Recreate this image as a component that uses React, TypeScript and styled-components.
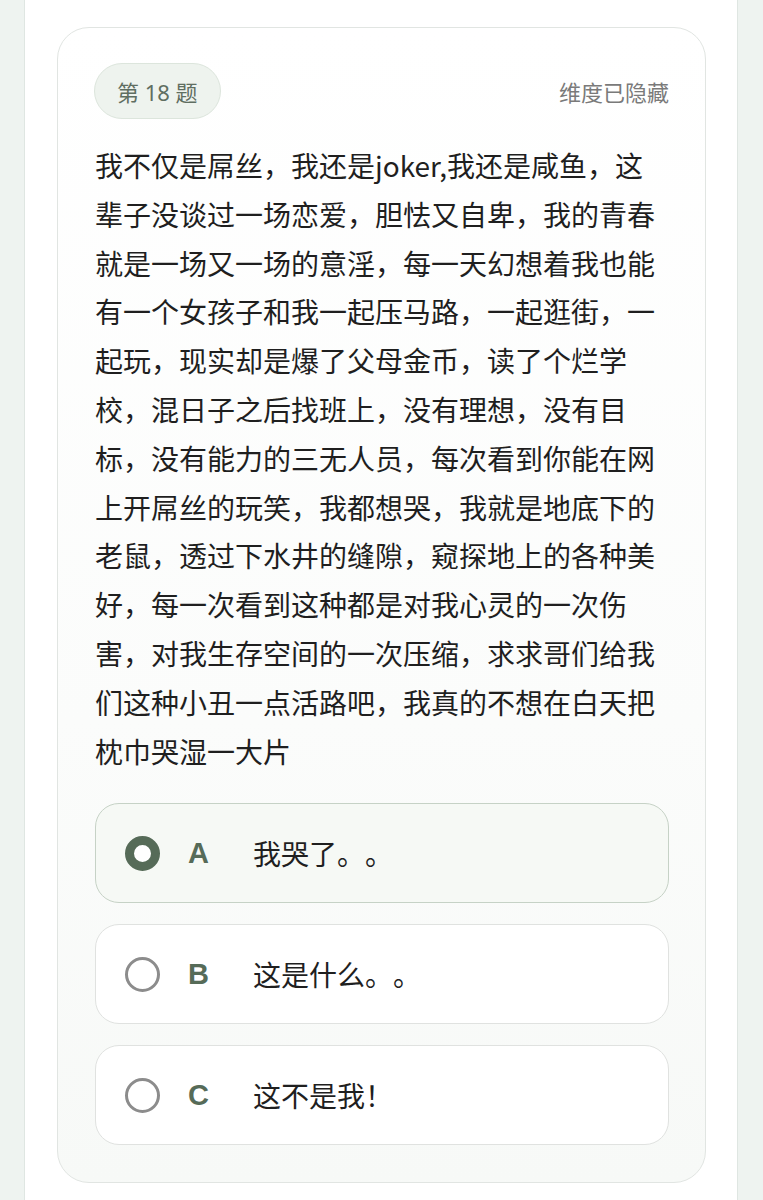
import React from "react";
import styled, { createGlobalStyle } from "styled-components";

const Global = createGlobalStyle`
  html, body {
    margin: 0;
    padding: 0;
    background: #eef3f0;
  }
  body {
    font-family: "Noto Sans CJK SC", "Noto Sans", sans-serif;
    -webkit-font-smoothing: antialiased;
    text-spacing-trim: space-all;
  }
`;

const Column = styled.div`
  box-sizing: border-box;
  width: 714px;
  margin-left: 24px;
  min-height: 1200px;
  background: #ffffff;
  border-left: 1px solid #dfe6e2;
  border-right: 1px solid #dfe6e2;
  padding: 27px 32px 40px;
`;

const Card = styled.section`
  box-sizing: border-box;
  width: 649px;
  border: 1px solid #e1e5e2;
  border-radius: 32px;
  background: linear-gradient(180deg, #ffffff 0%, #fbfcfb 60%, #f7f9f7 100%);
  padding: 35px 36px 37px 37px;
  display: flex;
  flex-direction: column;
`;

const Header = styled.div`
  display: flex;
  align-items: center;
  justify-content: space-between;
  height: 56px;
`;

const Badge = styled.div`
  box-sizing: border-box;
  height: 56px;
  display: flex;
  align-items: center;
  padding: 0 22px;
  border-radius: 28px;
  background: #eef3ee;
  border: 1px solid #dce5dc;
  color: #5f6e61;
  font-family: "Noto Sans", "Noto Sans CJK SC", sans-serif;
  font-size: 22px;
  margin-left: -1px;
`;

const Hidden = styled.div`
  color: #7a7a7a;
  font-size: 22px;
`;

const Question = styled.p`
  margin: 22px 0 0;
  font-size: 28px;
  line-height: 48.8px;
  color: #1f1f1f;
  text-spacing-trim: space-all;
`;

const Options = styled.div`
  display: flex;
  flex-direction: column;
  gap: 21px;
  margin-top: 28px;
`;

const Option = styled.div<{ $selected?: boolean }>`
  box-sizing: border-box;
  height: 100px;
  display: flex;
  align-items: center;
  padding-left: 29px;
  border-radius: 24px;
  border: 1.5px solid ${(p) => (p.$selected ? "#c6d2c6" : "#e0e2e0")};
  background: ${(p) => (p.$selected ? "#f6f9f5" : "#ffffff")};
`;

const Radio = styled.span<{ $selected?: boolean }>`
  box-sizing: border-box;
  width: 35px;
  height: 35px;
  border-radius: 50%;
  flex-shrink: 0;
  border: ${(p) => (p.$selected ? "9.5px solid #566b58" : "3px solid #8c8c8c")};
  background: #ffffff;
`;

const Letter = styled.span`
  width: 22px;
  margin-left: 28px;
  font-family: "Liberation Sans", Arial, sans-serif;
  font-weight: 700;
  font-size: 29px;
  color: #566b58;
`;

const OptionText = styled.span`
  margin-left: 43px;
  font-size: 28px;
  color: #1f1f1f;
  text-spacing-trim: space-all;
`;

const options = [
  { key: "A", text: "我哭了。。", selected: true },
  { key: "B", text: "这是什么。。", selected: false },
  { key: "C", text: "这不是我！", selected: false },
];

export default function App() {
  return (
    <>
      <Global />
      <Column>
        <Card>
          <Header>
            <Badge>第 18 题</Badge>
            <Hidden>维度已隐藏</Hidden>
          </Header>
          <Question>
            我不仅是屌丝，我还是joker,我还是咸鱼，这辈子没谈过一场恋爱，胆怯又自卑，我的青春就是一场又一场的意淫，每一天幻想着我也能有一个女孩子和我一起压马路，一起逛街，一起玩，现实却是爆了父母金币，读了个烂学校，混日子之后找班上，没有理想，没有目标，没有能力的三无人员，每次看到你能在网上开屌丝的玩笑，我都想哭，我就是地底下的老鼠，透过下水井的缝隙，窥探地上的各种美好，每一次看到这种都是对我心灵的一次伤害，对我生存空间的一次压缩，求求哥们给我们这种小丑一点活路吧，我真的不想在白天把枕巾哭湿一大片
          </Question>
          <Options>
            {options.map((o) => (
              <Option key={o.key} $selected={o.selected}>
                <Radio $selected={o.selected} />
                <Letter>{o.key}</Letter>
                <OptionText>{o.text}</OptionText>
              </Option>
            ))}
          </Options>
        </Card>
      </Column>
    </>
  );
}
